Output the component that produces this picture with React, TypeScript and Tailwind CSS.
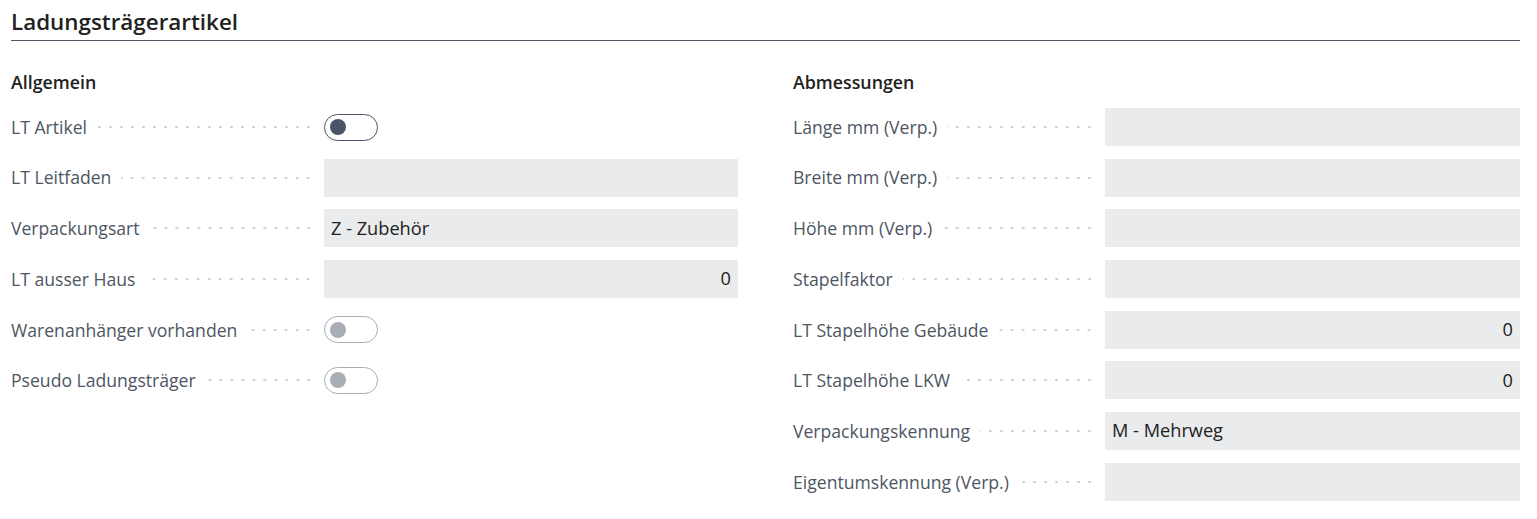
import React from 'react'

type Field =
  | { label: string; kind: 'toggle'; on?: boolean; disabled?: boolean }
  | { label: string; kind: 'text'; value?: string; align?: 'left' | 'right' }

const general: Field[] = [
  { label: 'LT Artikel', kind: 'toggle' },
  { label: 'LT Leitfaden', kind: 'text' },
  { label: 'Verpackungsart', kind: 'text', value: 'Z - Zubehör' },
  { label: 'LT ausser Haus', kind: 'text', value: '0', align: 'right' },
  { label: 'Warenanhänger vorhanden', kind: 'toggle', disabled: true },
  { label: 'Pseudo Ladungsträger', kind: 'toggle', disabled: true },
]

const dimensions: Field[] = [
  { label: 'Länge mm (Verp.)', kind: 'text' },
  { label: 'Breite mm (Verp.)', kind: 'text' },
  { label: 'Höhe mm (Verp.)', kind: 'text' },
  { label: 'Stapelfaktor', kind: 'text' },
  { label: 'LT Stapelhöhe Gebäude', kind: 'text', value: '0', align: 'right' },
  { label: 'LT Stapelhöhe LKW', kind: 'text', value: '0', align: 'right' },
  { label: 'Verpackungskennung', kind: 'text', value: 'M - Mehrweg' },
  { label: 'Eigentumskennung (Verp.)', kind: 'text' },
]

function Toggle({ disabled }: { disabled?: boolean }) {
  return (
    <div
      className={
        'flex h-[27px] w-[54px] items-center rounded-full border bg-white pl-[5px] ' +
        (disabled ? 'border-[#a8adb4]' : 'border-[#4a5468]')
      }
    >
      <div className={'h-[16px] w-[16px] rounded-full ' + (disabled ? 'bg-[#a9adb6]' : 'bg-[#4a5468]')} />
    </div>
  )
}

function Row({ field, wide }: { field: Field; wide?: boolean }) {
  return (
    <div className="mb-[12.7px] flex h-[38px] items-center">
      <span className="whitespace-nowrap text-[17.6px] text-[#4d5663]">{field.label}</span>
      <div className="ml-[10px] mr-[10px] h-[4px] flex-1 bg-[radial-gradient(circle,#c9cbce_1px,transparent_1.4px)] bg-[length:11px_4px] bg-[position:right_center] bg-repeat-x" />
      <div className={'shrink-0 ' + (wide ? 'w-[415px]' : 'w-[414px]')}>
        {field.kind === 'toggle' ? (
          <Toggle disabled={field.disabled} />
        ) : (
          <div
            className={
              'flex h-[38px] items-center bg-[#eaebed] px-[7px] text-[18.2px] text-[#212121] ' +
              (field.align === 'right' ? 'justify-end' : 'justify-start')
            }
          >
            {field.value}
          </div>
        )}
      </div>
    </div>
  )
}

function Group({ title, fields, wide }: { title: string; fields: Field[]; wide?: boolean }) {
  return (
    <section>
      <h3 className="mb-[15px] mt-[30px] h-[22px] text-[17.8px] font-semibold leading-[22px] text-[#212121]">
        {title}
      </h3>
      {fields.map((f) => (
        <Row key={f.label} field={f} wide={wide} />
      ))}
    </section>
  )
}

export default function App() {
  return (
    <div className="min-h-[519px] bg-white pl-[11px] pr-[17px] font-['Segoe_UI','Open_Sans',sans-serif]">
      <h2 className="border-b border-[#4e5662] pb-[4px] pt-[8px] text-[22.4px] font-semibold leading-[28px] text-[#212121]">
        Ladungsträgerartikel
      </h2>
      <div className="grid grid-cols-2 gap-x-[55px]">
        <Group title="Allgemein" fields={general} />
        <Group title="Abmessungen" fields={dimensions} wide />
      </div>
    </div>
  )
}
